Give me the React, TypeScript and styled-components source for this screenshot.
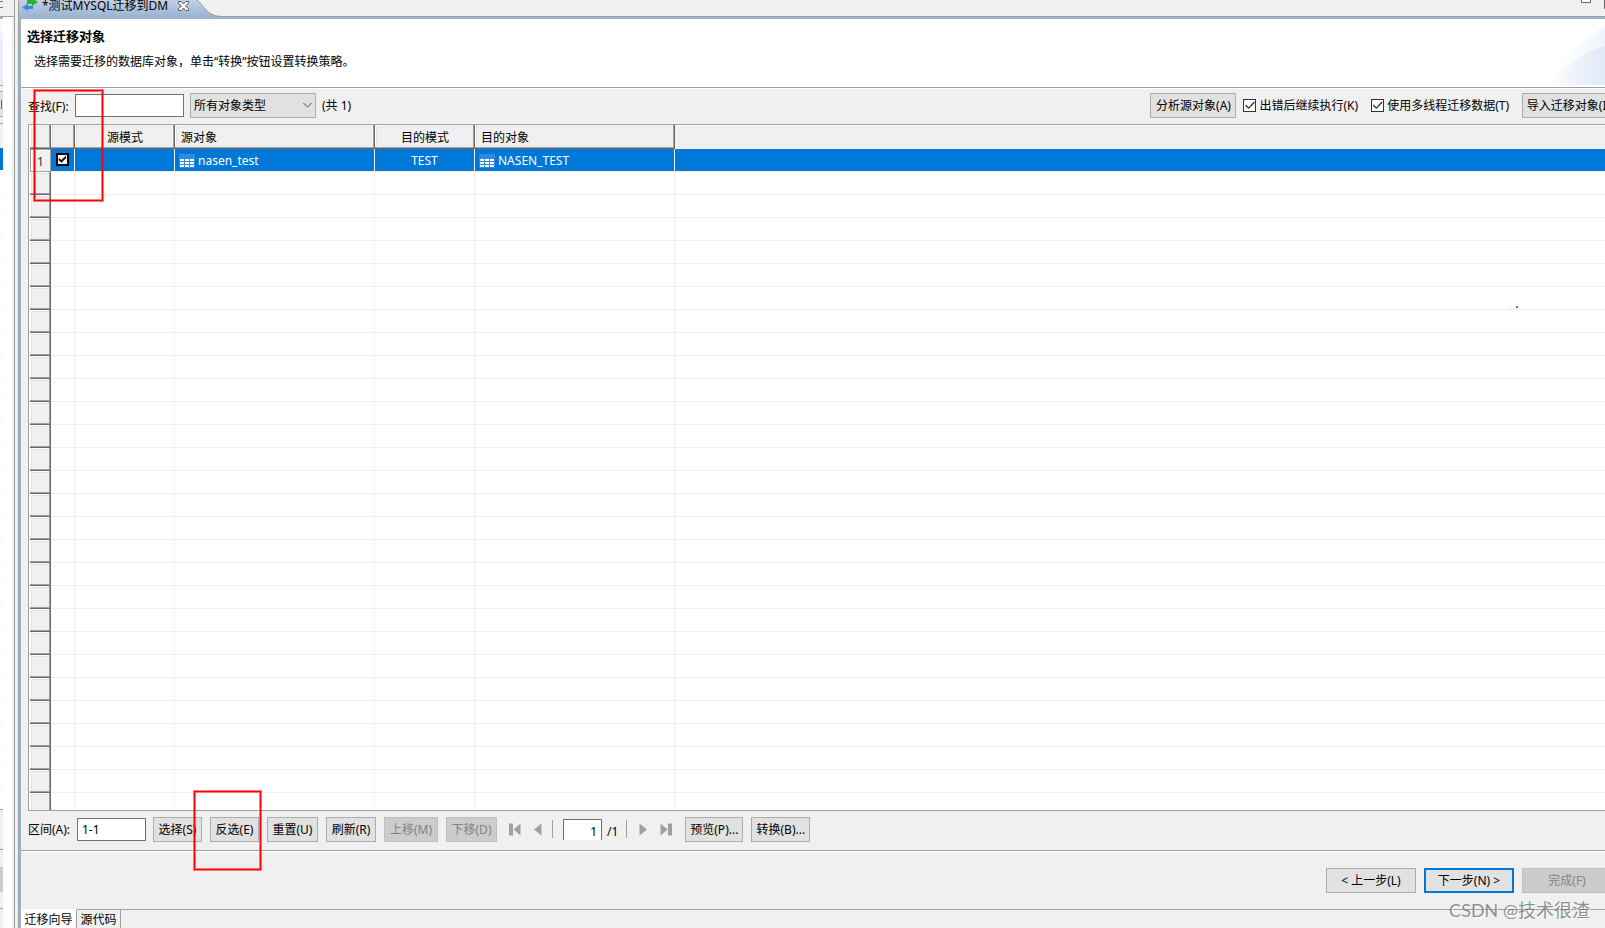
import React from "react";
import styled, { createGlobalStyle, css } from "styled-components";

const face = "#f0f0f0";
const shade = "#a0a0a0";
const dark = "#696969";
const accent = "#0078d7";
const frame = "#99b4d1";

const GlobalStyle = createGlobalStyle`
  * { box-sizing: border-box; }
  html, body { margin: 0; height: 100%; overflow: hidden; background: ${face}; }
  body, button, input, select {
    font-family: "Noto Sans", "Noto Sans CJK SC", sans-serif;
    font-size: 12px;
    line-height: 16px;
    color: #000;
  }
`;

const Screen = styled.div`
  position: relative;
  display: flex;
  height: 100vh;
  overflow: hidden;
  white-space: nowrap;
`;

/* ---- neighbouring view, only its right edge is visible ---- */
const Neighbour = styled.div`
  flex: none;
  width: 15px;
  display: flex;
  flex-direction: column;
  border-right: 1px solid ${shade};
  background: ${face};
`;
const NeighbourTop = styled.div`
  flex: none;
  height: 17px;
  border-bottom: 1px solid ${shade};
`;
const ToolStub = styled.svg`
  display: block;
`;
const NeighbourBody = styled.div`
  flex: 1;
  display: flex;
  width: 12px;
  background: #fff;
`;
const Sliver = styled.div`
  width: 3px;
  display: flex;
  flex-direction: column;
`;
const Piece = styled.div<{ $h?: number; $bg: string }>`
  flex: ${(p) => (p.$h ? "none" : 1)};
  height: ${(p) => (p.$h ? `${p.$h}px` : "auto")};
  background: ${(p) => p.$bg};
`;

const Sash = styled.div`
  flex: none;
  width: 3px;
  background: ${face};
`;

/* ---- editor ---- */
const Editor = styled.main`
  flex: none;
  width: calc(100% + 2px);
  display: flex;
  flex-direction: column;
  border-left: 1px solid ${shade};
  background: ${face};
`;
const TabStrip = styled.header`
  flex: none;
  height: 19px;
  display: flex;
  overflow: hidden;
  background: linear-gradient(${face} 16px, ${shade} 16px, ${shade} 17px, ${frame} 17px);
`;
const EditorTab = styled.div`
  display: flex;
  align-items: flex-start;
  gap: 4px;
  height: 19px;
  padding-left: 3px;
  background: linear-gradient(#c1d1e3, ${frame} 17px);
`;
const TabTitle = styled.span`
  height: 16px;
  margin-top: -2px;
`;
const CloseButton = styled.button`
  border: 0;
  padding: 0;
  margin-left: 6px;
  height: 12px;
  background: none;
  line-height: 0;
`;
const WindowTools = styled.svg`
  margin-left: auto;
`;

const EditorBody = styled.div`
  flex: 1;
  min-height: 0;
  display: flex;
  flex-direction: column;
  border-left: 2px solid ${frame};
`;
const Banner = styled.section`
  flex: none;
  height: 70px;
  display: flex;
  justify-content: space-between;
  background: #fff;
  border-bottom: 1px solid #fff;
  box-shadow: inset 0 -1px ${shade};
`;
const BannerText = styled.div`
  padding: 8px 0 0 6px;
`;
const Title = styled.h1`
  margin: 0;
  font-size: 13px;
  line-height: 18px;
`;
const Hint = styled.p`
  margin: 9px 0 0 7px;
  line-height: 16px;
`;

const Toolbar = styled.div`
  flex: none;
  display: flex;
  align-items: center;
  height: 35px;
  padding: 0 10px 2px 7px;
`;
const Cluster = styled.div<{ $gap: number }>`
  display: flex;
  align-items: center;
  gap: ${(p) => p.$gap}px;
`;
const RightCluster = styled(Cluster)`
  margin-left: auto;
`;
const FieldLabel = styled.label`
  width: 47px;
  padding-top: 2px;
`;
const Field = styled.input<{ $w: number }>`
  width: ${(p) => p.$w}px;
  height: 23px;
  padding: 0 4px;
  border: 1px solid #707070;
  border-radius: 0;
  background: #fff;
  outline: 0;
`;
const PageField = styled(Field)`
  height: 21px;
  border-bottom: 0;
  text-align: right;
  padding: 3px 4px 0;
`;
const SelectBox = styled.div`
  position: relative;
  display: flex;
  margin: 0 6px;
`;
const TypeSelect = styled.select`
  appearance: none;
  width: 126px;
  height: 25px;
  padding: 1px 20px 0 3px;
  border: 1px solid #adadad;
  border-radius: 0;
  background: #e1e1e1;
`;
const Chevron = styled.svg`
  position: absolute;
  right: 4px;
  top: 9px;
  pointer-events: none;
`;
const Count = styled.span`
  padding-top: 1px;
`;
const Button = styled.button<{ $w: number; $primary?: boolean }>`
  flex: none;
  width: ${(p) => p.$w}px;
  height: 25px;
  padding: 1px 0 0;
  border: 1px solid #adadad;
  border-radius: 0;
  background: #e1e1e1;
  white-space: pre;
  ${(p) => p.$primary && css`border: 2px solid ${accent};`}
  &:disabled {
    border-color: #bfbfbf;
    background: #ccc;
    color: #838383;
  }
`;
const CheckLabel = styled.label`
  display: flex;
  align-items: center;
  gap: 3px;
`;
const Tick = styled.input<{ $bold?: boolean }>`
  appearance: none;
  display: grid;
  place-items: center;
  flex: none;
  width: 13px;
  height: 13px;
  margin: 0;
  border: ${(p) => (p.$bold ? 2 : 1)}px solid ${(p) => (p.$bold ? "#000" : "#333")};
  background: #fff;
  &:checked::after {
    content: "";
    width: ${(p) => (p.$bold ? 9 : 11)}px;
    height: ${(p) => (p.$bold ? 9 : 11)}px;
    background: ${(p) => (p.$bold ? "#000" : "#333")};
    clip-path: ${(p) =>
      p.$bold
        ? "polygon(8% 38%, 38% 62%, 90% 10%, 90% 38%, 38% 92%, 8% 65%)"
        : "polygon(6% 52%, 14% 42%, 38% 66%, 86% 14%, 94% 24%, 38% 82%)"};
  }
`;

/* ---- object grid ---- */
const GridFrame = styled.div`
  flex: 1;
  min-height: 0;
  overflow: hidden;
  margin-left: 7px;
  padding-left: 1px;
  border: 1px solid ${shade};
  background: #fff;
`;
const Grid = styled.table`
  width: 100%;
  table-layout: fixed;
  border-collapse: separate;
  border-spacing: 0;
`;
const raised = css`
  border-right: 1px solid ${dark};
  border-bottom: 1px solid ${dark};
  box-shadow: inset -1px -1px ${shade}, inset 1px 1px #fff, inset 2px 2px #e3e3e3;
`;
const HeadCell = styled.th<{ $align?: string; $flat?: boolean }>`
  height: 24px;
  padding: 3px 5px 0 6px;
  background: ${face};
  font-weight: 400;
  text-align: ${(p) => p.$align ?? "left"};
  ${(p) => (p.$flat ? css`box-shadow: inset 0 1px #fff;` : raised)}
`;
const RowHead = styled.th<{ $current?: boolean }>`
  height: 23px;
  padding: 2px 0 0;
  background: ${face};
  font-weight: 400;
  ${(p) =>
    p.$current
      ? css`border: 1px solid ${shade}; box-shadow: inset 1px 1px #fff; color: #333;`
      : raised}
`;
const Cell = styled.td<{ $align?: string; $last?: boolean; $selected?: boolean }>`
  height: 23px;
  padding: 2px 4px 0;
  border-right: ${(p) => (p.$last ? "0" : `1px solid ${face}`)};
  border-bottom: 1px solid ${face};
  text-align: ${(p) => p.$align ?? "left"};
  ${(p) => p.$selected && css`background: ${accent}; color: #fff;`}
`;
const ObjectName = styled.span`
  display: flex;
  align-items: center;
  gap: 3px;
`;
const TickHolder = styled.div`
  display: flex;
  padding: 0 0 4px 1px;
`;

/* ---- bars under the grid ---- */
const ActionBar = styled.div`
  flex: none;
  display: flex;
  align-items: center;
  height: 41px;
  padding: 0 8px 4px 7px;
  border-bottom: 1px solid #fff;
  box-shadow: inset 0 -1px ${shade};
`;
const RangeField = styled(Field)`
  margin: 0 7px 0 2px;
`;
const Pager = styled.nav`
  display: flex;
  align-items: center;
  margin: 0 12px 0 11px;
`;
const PagerButton = styled.button`
  width: 13px;
  height: 13px;
  padding: 0;
  border: 0;
  background: none;
  line-height: 0;
`;
const Divider = styled.span`
  width: 1px;
  height: 18px;
  margin: 0 10px 0 8px;
  background: ${shade};
`;
const PageCount = styled.span`
  padding: 5px 0 0 5px;
`;
const WizardBar = styled.div`
  flex: none;
  display: flex;
  justify-content: flex-end;
  gap: 8px;
  height: 57px;
  padding: 16px 13px 0 0;
`;
const PageTabs = styled.footer`
  flex: none;
  display: flex;
  height: 19px;
  overflow: hidden;
`;
const PageTab = styled.button<{ $active?: boolean }>`
  flex: none;
  width: ${(p) => (p.$active ? 56 : 44)}px;
  padding: 2px 0 0;
  border: 0;
  border-top: 1px solid ${(p) => (p.$active ? "#fff" : shade)};
  border-right: 1px solid ${shade};
  background: ${(p) => (p.$active ? "#fff" : face)};
`;
const TabsRest = styled.div`
  flex: 1;
  border-top: 1px solid ${shade};
`;

/* ---- annotations over the window ---- */
const Mark = styled.div<{ $x: number; $y: number; $w: number; $h: number }>`
  position: absolute;
  left: ${(p) => p.$x}px;
  top: ${(p) => p.$y}px;
  width: ${(p) => p.$w}px;
  height: ${(p) => p.$h}px;
  border: 1px solid #f00;
  box-shadow: 0 0 0 1px rgba(255, 0, 0, 0.5), inset 0 0 0 1px rgba(255, 0, 0, 0.5);
  pointer-events: none;
`;
const Speck = styled.div`
  position: absolute;
  right: 87px;
  top: 306px;
  width: 2px;
  height: 2px;
  background: #f0505a;
`;
const Watermark = styled.div`
  position: absolute;
  right: 15px;
  bottom: 5px;
  font-size: 18px;
  line-height: 26px;
  font-family: Lato, "Noto Sans CJK SC", sans-serif;
  color: rgba(110, 110, 110, 0.75);
  text-shadow: 1px 1px rgba(255, 255, 255, 0.7);
  pointer-events: none;
`;

const TableIcon = () => (
  <svg width="16" height="14" viewBox="0 0 16 14" shapeRendering="crispEdges" aria-hidden="true">
    <rect width="16" height="14" fill="#2c8ae0" />
    {[5, 8, 11].map((y) =>
      [1, 6, 11].map((x) => <rect key={`${x}-${y}`} x={x} y={y} width="4" height="2" fill="#fff" />)
    )}
  </svg>
);

const PagerIcon = ({ bar, back }: { bar?: boolean; back?: boolean }) => (
  <svg width="13" height="13" viewBox="0 0 13 13" fill="#9fa1a1" aria-hidden="true">
    <g transform={back ? "translate(13 0) scale(-1 1)" : undefined}>
      <path d={bar ? "M0.5 0.5 L7.5 6.5 L0.5 12.5Z" : "M2.5 0.5 L10 6.5 L2.5 12.5Z"} />
      {bar && <rect x="8" y="0.5" width="4" height="12" />}
    </g>
  </svg>
);

const fillerRows = Array.from({ length: 28 }, (_, i) => i);

export default function App() {
  return (
    <>
      <GlobalStyle />
      <Screen>
        <Neighbour aria-hidden="true">
          <NeighbourTop>
            <ToolStub width="4" height="9" viewBox="0 0 4 9">
              <path d="M0 1.5H3 M0 7.5H3" stroke="#777" fill="none" />
            </ToolStub>
          </NeighbourTop>
          <NeighbourBody>
            <Sliver>
              <Piece $h={2} $bg={frame} />
              <Piece $h={66} $bg="linear-gradient(#fff, #e6ecf9 40%)" />
              <Piece $h={1} $bg={shade} />
              <Piece $h={5} $bg={face} />
              <Piece $h={1} $bg="#adadad" />
              <Piece $h={8} $bg="#e1e1e1" />
              <Piece $h={9} $bg="linear-gradient(90deg, #e1e1e1 1px, #2f6fc0 1px, #2f6fc0 2px, #e1e1e1 2px)" />
              <Piece $h={7} $bg="#e1e1e1" />
              <Piece $h={1} $bg="#adadad" />
              <Piece $h={6} $bg={face} />
              <Piece $h={1} $bg={shade} />
              <Piece $h={24} $bg={face} />
              <Piece $h={22} $bg={accent} />
              <Piece $bg={`repeating-linear-gradient(#fff, #fff 22px, ${face} 22px, ${face} 23px)`} />
              <Piece $h={1} $bg={shade} />
              <Piece $h={39} $bg={face} />
              <Piece $h={1} $bg={shade} />
              <Piece $h={17} $bg={face} />
              <Piece $h={25} $bg="#ccc" />
              <Piece $h={16} $bg={face} />
              <Piece $h={1} $bg={shade} />
              <Piece $h={19} $bg={face} />
            </Sliver>
          </NeighbourBody>
        </Neighbour>
        <Sash />
        <Editor>
          <TabStrip>
            <EditorTab>
              <svg width="16" height="11" viewBox="0 0 16 11" aria-hidden="true">
                <path d="M5 0H10V-2L16 2L10 6V4H5Z" fill="#2eb135" />
                <path d="M11 9H6V11L0 7.500L6 3.500V6H11Z" fill="#2f8be0" />
              </svg>
              <TabTitle>*测试MYSQL迁移到DM</TabTitle>
              <CloseButton aria-label="关闭">
                <svg width="11" height="11" viewBox="0 0 11 11">
                  <path
                    d="M0.5 0.5H3L5.500 3L8 0.500H10.500V2.500L7.500 5L10.500 7.500V9.500H8L5.500 7L3 9.500H0.500V7.500L3.500 5L0.500 2.500Z"
                    fill="#fff"
                    stroke="#555"
                  />
                </svg>
              </CloseButton>
            </EditorTab>
            <svg width="33" height="19" viewBox="0 0 33 19" aria-hidden="true">
              <defs>
                <linearGradient id="tabFill" x1="0" y1="0" x2="0" y2="1">
                  <stop offset="0" stopColor="#c1d1e3" />
                  <stop offset="0.9" stopColor={frame} />
                </linearGradient>
              </defs>
              <path d="M0 0H8C15 5 17 16 32 16.500V19H0Z" fill="url(#tabFill)" />
              <path d="M8 0C15 5 17 16 32 16.500" fill="none" stroke="#999" />
            </svg>
            <WindowTools width="48" height="10" viewBox="0 0 48 10" fill="#fff" stroke="#666">
              <path d="M4.500 -3V2.500H13.500V-3" />
              <path d="M27.500 -3V8.500H38" />
            </WindowTools>
          </TabStrip>
          <EditorBody>
            <Banner>
              <BannerText>
                <Title>选择迁移对象</Title>
                <Hint>选择需要迁移的数据库对象，单击“转换”按钮设置转换策略。</Hint>
              </BannerText>
              <svg width="76" height="66" viewBox="0 0 76 66" aria-hidden="true">
                <defs>
                  <linearGradient id="wave" x1="0" y1="0" x2="1" y2="0">
                    <stop offset="0" stopColor="#dfe7f7" stopOpacity="0" />
                    <stop offset="0.7" stopColor="#dfe7f7" />
                    <stop offset="1" stopColor="#dfe7f7" />
                  </linearGradient>
                </defs>
                <path d="M0 66Q22 26 56 7L76 0V66Z" fill="url(#wave)" opacity="0.35" />
                <path d="M28 46Q42 20 58 8L76 0V30Z" fill="url(#wave)" opacity="0.3" />
                <path d="M0 66Q25 36 56 27L76 22V66Z" fill="url(#wave)" opacity="0.85" />
              </svg>
            </Banner>

            <Toolbar>
              <FieldLabel htmlFor="find">查找(F):</FieldLabel>
              <Field id="find" $w={109} />
              <SelectBox>
                <TypeSelect aria-label="对象类型">
                  <option>所有对象类型</option>
                </TypeSelect>
                <Chevron width="9" height="7" viewBox="0 0 9 7" aria-hidden="true">
                  <path d="M0.5 1L4.500 5L8.500 1" fill="none" stroke="#444" />
                </Chevron>
              </SelectBox>
              <Count>(共 1)</Count>
              <RightCluster $gap={13}>
                <Cluster $gap={7}>
                  <Button $w={86}>分析源对象(A)</Button>
                  <CheckLabel>
                    <Tick type="checkbox" defaultChecked />
                    <Count>出错后继续执行(K)</Count>
                  </CheckLabel>
                </Cluster>
                <CheckLabel>
                  <Tick type="checkbox" defaultChecked />
                  <Count>使用多线程迁移数据(T)</Count>
                </CheckLabel>
                <Button $w={93}>导入迁移对象(I)</Button>
              </RightCluster>
            </Toolbar>

            <GridFrame>
              <Grid>
                <colgroup>
                  <col width="21" />
                  <col width="24" />
                  <col width="100" />
                  <col width="200" />
                  <col width="100" />
                  <col width="200" />
                  <col />
                </colgroup>
                <thead>
                  <tr>
                    <HeadCell />
                    <HeadCell />
                    <HeadCell $align="center">源模式</HeadCell>
                    <HeadCell>源对象</HeadCell>
                    <HeadCell $align="center">目的模式</HeadCell>
                    <HeadCell>目的对象</HeadCell>
                    <HeadCell $flat />
                  </tr>
                </thead>
                <tbody>
                  <tr>
                    <RowHead $current>1</RowHead>
                    <Cell $selected>
                      <TickHolder>
                        <Tick type="checkbox" $bold defaultChecked aria-label="nasen_test" />
                      </TickHolder>
                    </Cell>
                    <Cell $selected />
                    <Cell $selected>
                      <ObjectName>
                        <TableIcon />
                        nasen_test
                      </ObjectName>
                    </Cell>
                    <Cell $selected $align="center">TEST</Cell>
                    <Cell $selected>
                      <ObjectName>
                        <TableIcon />
                        NASEN_TEST
                      </ObjectName>
                    </Cell>
                    <Cell $selected $last />
                  </tr>
                  {fillerRows.map((i) => (
                    <tr key={i}>
                      <RowHead />
                      <Cell />
                      <Cell />
                      <Cell />
                      <Cell />
                      <Cell />
                      <Cell $last />
                    </tr>
                  ))}
                </tbody>
              </Grid>
            </GridFrame>

            <ActionBar>
              <FieldLabel htmlFor="range">区间(A):</FieldLabel>
              <RangeField id="range" $w={69} defaultValue="1-1" />
              <Cluster $gap={8}>
                <Button $w={49}>选择(S)</Button>
                <Button $w={49}>反选(E)</Button>
                <Button $w={51}>重置(U)</Button>
                <Button $w={50}>刷新(R)</Button>
                <Button $w={54} disabled>上移(M)</Button>
                <Button $w={51} disabled>下移(D)</Button>
              </Cluster>
              <Pager aria-label="分页">
                <Cluster $gap={10}>
                  <PagerButton aria-label="首页"><PagerIcon bar back /></PagerButton>
                  <PagerButton aria-label="上一页"><PagerIcon back /></PagerButton>
                </Cluster>
                <Divider />
                <PageField $w={39} defaultValue="1" aria-label="页码" />
                <PageCount>/1</PageCount>
                <Divider />
                <Cluster $gap={10}>
                  <PagerButton aria-label="下一页"><PagerIcon /></PagerButton>
                  <PagerButton aria-label="末页"><PagerIcon bar /></PagerButton>
                </Cluster>
              </Pager>
              <Cluster $gap={8}>
                <Button $w={58}>预览(P)...</Button>
                <Button $w={59}>转换(B)...</Button>
              </Cluster>
            </ActionBar>

            <WizardBar>
              <Button $w={90}>{"< 上一步(L)"}</Button>
              <Button $w={90} $primary>{"下一步(N) >"}</Button>
              <Button $w={90} disabled>完成(F)</Button>
            </WizardBar>
            <PageTabs>
              <PageTab $active>迁移向导</PageTab>
              <PageTab>源代码</PageTab>
              <TabsRest />
            </PageTabs>
          </EditorBody>
        </Editor>

        <Mark $x={34} $y={90} $w={69} $h={111} />
        <Mark $x={194} $y={791} $w={67} $h={79} />
        <Speck />
        <Watermark>CSDN @技术很渣</Watermark>
      </Screen>
    </>
  );
}
